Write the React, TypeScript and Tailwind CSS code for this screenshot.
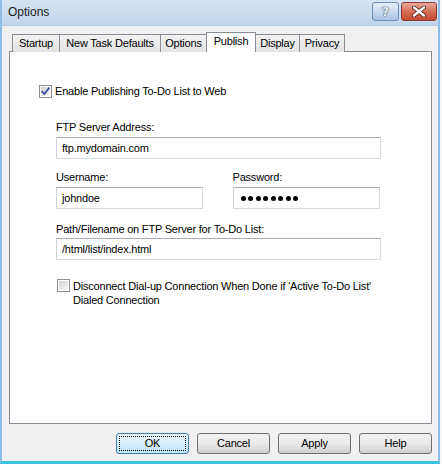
import React from "react";

function CheckBox({ checked }: { checked: boolean }) {
  return (
    <div className="w-[13px] h-[13px] border border-[#8f8f8f] bg-white p-[1px] shrink-0">
      <div className="w-full h-full bg-gradient-to-br from-[#cfcfcf] via-[#e6e6e6] to-[#f8f8f8] relative">
        {checked && (
          <svg width="11" height="11" viewBox="0 0 11 11" className="absolute -left-[1px] -top-[1px]">
            <path d="M2.2 5.6 L4.4 8 L8.8 2.3" fill="none" stroke="#2f4fa3" strokeWidth="1.7" strokeLinecap="square" />
          </svg>
        )}
      </div>
    </div>
  );
}

function TextBox({ children, className }: { children: React.ReactNode; className?: string }) {
  return (
    <div
      className={
        "h-[22px] border border-[#d5d8de] border-t-[#abadb3] border-l-[#d0d3da] bg-white flex items-center pl-[5px] " +
        (className ?? "")
      }
    >
      {children}
    </div>
  );
}

function Tab({ label, w, selected }: { label: string; w: string; selected?: boolean }) {
  if (selected) {
    return (
      <div
        className={
          "h-[20px] bg-white border border-b-0 border-[#898c95] flex items-start justify-center pt-[2px] relative z-10 -ml-px " + w
        }
      >
        {label}
      </div>
    );
  }
  return (
    <div
      className={
        "h-[18px] bg-gradient-to-b from-[#f2f2f2] to-[#e3e3e3] border border-b-0 border-[#898c95] flex items-start justify-center pt-[2px] -ml-px first:ml-0 " +
        w
      }
    >
      {label}
    </div>
  );
}

function Button({ label, isDefault }: { label: string; isDefault?: boolean }) {
  if (isDefault) {
    return (
      <div className="w-[73px] h-[21px] rounded-[3px] border border-[#3c7fb1] bg-gradient-to-b from-[#eaf6fd] via-[#d9f0fc] to-[#bee6fd] p-[2px]">
        <div className="w-full h-full border border-dotted border-black flex items-center justify-center">{label}</div>
      </div>
    );
  }
  return (
    <div className="w-[73px] h-[21px] rounded-[3px] border border-[#707070] bg-gradient-to-b from-[#f2f2f2] via-[#ebebeb] to-[#cfcfcf] flex items-center justify-center">
      {label}
    </div>
  );
}

export default function App() {
  return (
    <div className="w-[442px] h-[464px] bg-[#f6f6f6] font-['Liberation_Sans',Arial,sans-serif] text-[11px] leading-[13px] tracking-[-0.2px] text-black">
      <div className="w-[440px] h-[464px] bg-[#f0f0f0] flex flex-col border-l-[2px] border-l-[#8ebde6] border-r-[2px] border-r-[#8ebde6] border-b-[3px] border-b-[#3cc2dd] overflow-hidden">
        {/* Title bar */}
        <div className="h-[26px] shrink-0 flex items-start justify-between bg-gradient-to-b from-[#d5e4f4] to-[#c0d5ec] border-b border-[#b7cce3]">
          <span className="text-[12px] tracking-normal ml-[6px] mt-[6px] text-[#1a1a1a]">Options</span>
          <div className="flex gap-[2px] mt-[2px] mr-[1px]">
            <div className="w-[27px] h-[19px] rounded-[3px] border border-[#6c8fb7] bg-gradient-to-b from-[#e4eef9] via-[#c8dbf0] to-[#a9c3e2] flex items-center justify-center">
              <span className="font-['DejaVu_Sans',sans-serif] font-bold text-[13px] text-[#e8eef6] [text-shadow:0_0_1px_#4a5a70,0_0_1px_#4a5a70,0_0_1px_#4a5a70]">?</span>
            </div>
            <div className="w-[36px] h-[19px] rounded-[3px] border border-[#8a3a2e] bg-gradient-to-b from-[#e9a99b] via-[#d56f58] to-[#c14a30] flex items-center justify-center">
              <svg width="14" height="11" viewBox="0 0 14 11">
                <path d="M2 1.5 L12 9.5 M12 1.5 L2 9.5" stroke="#4a1a12" strokeWidth="4" strokeLinecap="round" />
                <path d="M2 1.5 L12 9.5 M12 1.5 L2 9.5" stroke="#ffffff" strokeWidth="2.4" strokeLinecap="round" />
              </svg>
            </div>
          </div>
        </div>

        {/* Tabs */}
        <div className="flex items-end ml-[10px] mt-[6px] -mb-px relative z-10">
          <Tab label="Startup" w="w-[48px]" />
          <Tab label="New Task Defaults" w="w-[102px]" />
          <Tab label="Options" w="w-[47px]" />
          <Tab label="Publish" w="w-[50px]" selected />
          <Tab label="Display" w="w-[45px]" />
          <Tab label="Privacy" w="w-[46px]" />
        </div>

        {/* Pane */}
        <div className="ml-[7px] w-[423px] h-[373px] shrink-0 border border-[#898c95] bg-white flex flex-col">
          <div className="flex items-center gap-[3px] ml-[29px] mt-[33px]">
            <CheckBox checked />
            <span>Enable Publishing To-Do List to Web</span>
          </div>

          <div className="ml-[46px] mt-[23px] w-[324px] flex flex-col">
            <span>FTP Server Address:</span>
            <TextBox className="mt-[3px] w-[325px]">ftp.mydomain.com</TextBox>

            <div className="flex gap-[30px] mt-[12px]">
              <div className="flex flex-col w-[147px]">
                <span>Username:</span>
                <TextBox className="mt-[3px]">johndoe</TextBox>
              </div>
              <div className="flex flex-col w-[148px]">
                <span>Password:</span>
                <TextBox className="mt-[3px]">
                  <span className="flex gap-[2.5px] ml-[2px]">
                    {Array.from({ length: 8 }).map((_, i) => (
                      <span key={i} className="w-[5px] h-[5px] rounded-full bg-black inline-block" />
                    ))}
                  </span>
                </TextBox>
              </div>
            </div>

            <span className="mt-[14px]">Path/Filename on FTP Server for To-Do List:</span>
            <TextBox className="mt-[2px] w-[325px]">/html/list/index.html</TextBox>
          </div>

          <div className="flex items-start gap-[3px] ml-[47px] mt-[19px]">
            <CheckBox checked={false} />
            <div className="flex flex-col leading-[14px]">
              <span>Disconnect Dial-up Connection When Done if 'Active To-Do List'</span>
              <span>Dialed Connection</span>
            </div>
          </div>
        </div>

        {/* Buttons */}
        <div className="flex justify-end gap-[8px] mt-[9px] pr-[6px]">
          <Button label="OK" isDefault />
          <Button label="Cancel" />
          <Button label="Apply" />
          <Button label="Help" />
        </div>
      </div>
    </div>
  );
}
